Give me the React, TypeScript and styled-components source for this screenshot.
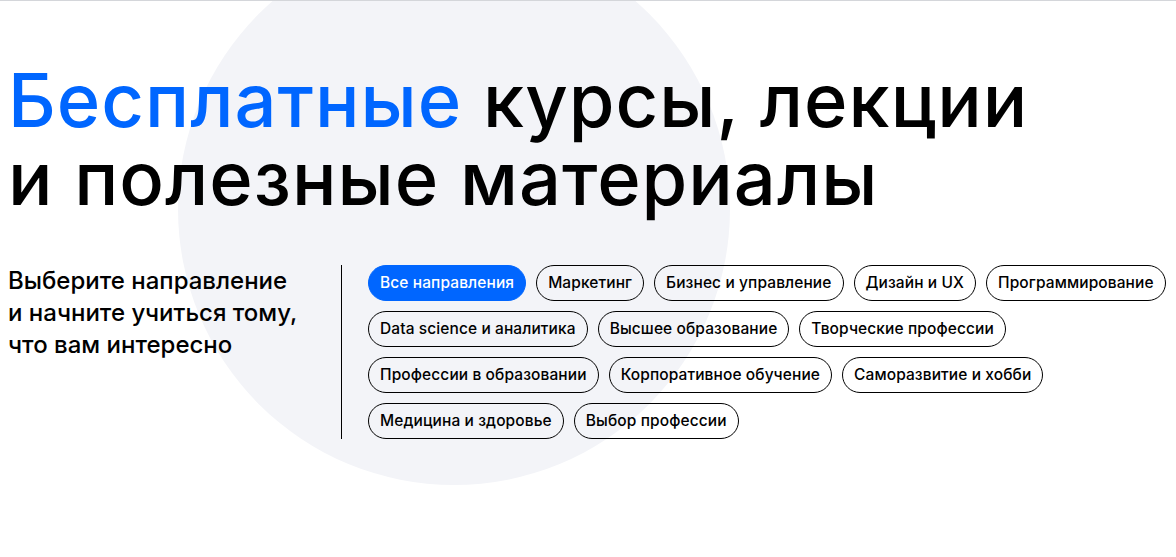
import React from "react";
import styled, { createGlobalStyle } from "styled-components";

const Global = createGlobalStyle`
  html, body { margin: 0; padding: 0; background: #fff; }
  body { font-family: Inter, "Noto Sans", sans-serif; color: #000; overflow: hidden; }
`;

const Page = styled.div`
  position: relative;
  width: 1176px;
  height: 557px;
  overflow: hidden;
  border-top: 1px solid #d4d6da;
  box-sizing: border-box;
`;

const Circle = styled.div`
  position: absolute;
  left: 178px;
  top: -68px;
  width: 552px;
  height: 552px;
  border-radius: 50%;
  background: #f3f4f8;
  z-index: 0;
`;

const Content = styled.main`
  position: relative;
  z-index: 1;
  padding: 60px 4px 0 8px;
  display: flex;
  flex-direction: column;
  gap: 48px;
`;

const Title = styled.h1`
  margin: 0;
  font-size: 74px;
  line-height: 78px;
  font-weight: 500;
  letter-spacing: 1px;
`;

const Accent = styled.span`
  color: #0066ff;
`;

const Row = styled.section`
  display: flex;
  align-items: flex-start;
`;

const Lead = styled.p`
  margin: 0;
  width: 333px;
  flex-shrink: 0;
  font-size: 24px;
  line-height: 32px;
  font-weight: 500;
`;

const Chips = styled.div`
  flex: 1;
  border-left: 1px solid #000;
  padding-left: 26px;
  display: flex;
  flex-wrap: wrap;
  gap: 10px;
`;

const Chip = styled.button<{ $active?: boolean }>`
  height: 36px;
  padding: 0 11px;
  border-radius: 18px;
  border: 1px solid ${(p) => (p.$active ? "#0066ff" : "#000")};
  background: ${(p) => (p.$active ? "#0066ff" : "transparent")};
  color: ${(p) => (p.$active ? "#fff" : "#000")};
  font-family: Inter, "Noto Sans", sans-serif;
  font-size: 15.5px;
  letter-spacing: 0.1px;
  font-weight: 500;
  line-height: 34px;
  white-space: nowrap;
  cursor: pointer;
`;

const items = [
  "Все направления",
  "Маркетинг",
  "Бизнес и управление",
  "Дизайн и UX",
  "Программирование",
  "Data science и аналитика",
  "Высшее образование",
  "Творческие профессии",
  "Профессии в образовании",
  "Корпоративное обучение",
  "Саморазвитие и хобби",
  "Медицина и здоровье",
  "Выбор профессии",
];

export default function App() {
  return (
    <>
      <Global />
      <Page>
        <Circle />
        <Content>
          <Title>
            <Accent>Бесплатные</Accent> курсы, лекции
            <br />и полезные материалы
          </Title>
          <Row>
            <Lead>
              Выберите направление
              <br />и начните учиться тому,
              <br />
              что вам интересно
            </Lead>
            <Chips>
              {items.map((t, i) => (
                <Chip key={t} $active={i === 0}>
                  {t}
                </Chip>
              ))}
            </Chips>
          </Row>
        </Content>
      </Page>
    </>
  );
}
